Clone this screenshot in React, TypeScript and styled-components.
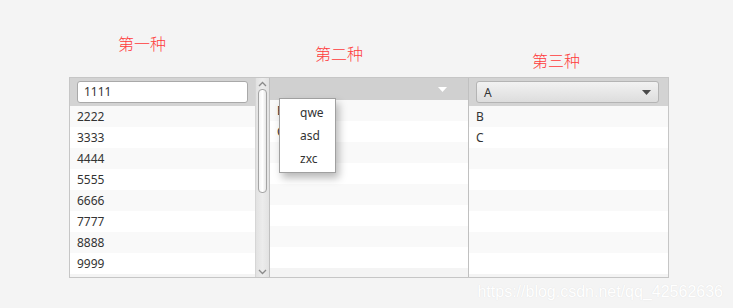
import styled, { createGlobalStyle } from "styled-components";

const GlobalStyle = createGlobalStyle`
  html, body {
    margin: 0;
    padding: 0;
    background: #f4f4f4;
  }
  body {
    font-family: "Noto Sans", "Open Sans", sans-serif;
  }
`;

const listOne = ["2222", "3333", "4444", "5555", "6666", "7777", "8888", "9999"];
const popupItems = ["qwe", "asd", "zxc"];
const listThree = ["B", "C"];

export default function App() {
  return (
    <Page>
      <GlobalStyle />
      <Labels>
        <Title $left={118} $top={35}>第一种</Title>
        <Title $left={149} $top={45}>第二种</Title>
        <Title $left={169} $top={52}>第三种</Title>
      </Labels>
      <Panels>
        <PanelOne>
          <ListPane>
            <FieldHeader>
              <TextField>1111</TextField>
            </FieldHeader>
            {listOne.map((item, index) => (
              <Row key={item} $odd={index % 2 === 0}>
                {item}
              </Row>
            ))}
          </ListPane>
          <ScrollBar>
            <Chevron>
              <svg width="9" height="6" viewBox="0 0 9 6">
                <path d="M1 5 L4.5 1.5 L8 5" fill="none" stroke="#8a8a8a" strokeWidth="1.3" />
              </svg>
            </Chevron>
            <Thumb />
            <Chevron>
              <svg width="9" height="6" viewBox="0 0 9 6">
                <path d="M1 1 L4.5 4.5 L8 1" fill="none" stroke="#8a8a8a" strokeWidth="1.3" />
              </svg>
            </Chevron>
          </ScrollBar>
        </PanelOne>
        <PanelTwo>
          <ArrowHeader>
            <svg width="9" height="5" viewBox="0 0 9 5">
              <path d="M0 0 L9 0 L4.5 5 Z" fill="#ffffff" />
            </svg>
          </ArrowHeader>
          {Array.from({ length: 8 }).map((_, index) => (
            <Row key={index} $odd={index % 2 === 0}>
              {listThree[index] ?? ""}
            </Row>
          ))}
          <Popup>
            {popupItems.map((item) => (
              <PopupItem key={item}>{item}</PopupItem>
            ))}
          </Popup>
        </PanelTwo>
        <PanelThree>
          <FieldHeader>
            <Combo>
              <span>A</span>
              <svg width="9" height="5" viewBox="0 0 9 5">
                <path d="M0 0 L9 0 L4.5 5 Z" fill="#4a4a4a" />
              </svg>
            </Combo>
          </FieldHeader>
          {Array.from({ length: 8 }).map((_, index) => (
            <Row key={index} $odd={index % 2 === 0}>
              {listThree[index] ?? ""}
            </Row>
          ))}
        </PanelThree>
      </Panels>
      <Watermark>https://blog.csdn.net/qq_42562636</Watermark>
    </Page>
  );
}

const Page = styled.div`
  width: 733px;
  height: 308px;
  overflow: hidden;
  position: relative;
`;

const Labels = styled.div`
  height: 77px;
  display: flex;
  align-items: flex-start;
`;

const Title = styled.div<{ $left: number; $top: number }>`
  margin-left: ${(p) => p.$left}px;
  margin-top: ${(p) => p.$top}px;
  width: 48px;
  font-family: "Noto Sans CJK SC", sans-serif;
  font-size: 16px;
  font-weight: 300;
  line-height: 16px;
  color: #ff3b3b;
  white-space: nowrap;
`;

const Panels = styled.div`
  margin-left: 69px;
  width: 598px;
  height: 199px;
  border: 1px solid #c6c6c6;
  display: flex;
  font-size: 12px;
  color: #333333;
`;

const PanelOne = styled.div`
  width: 199px;
  display: flex;
  border-right: 1px solid #c0c0c0;
  overflow: hidden;
`;

const ListPane = styled.div`
  flex: 1;
  overflow: hidden;
`;

const FieldHeader = styled.div`
  height: 28px;
  background: #d3d3d3;
  padding: 3px 0 0 7px;
  box-sizing: border-box;
`;

const TextField = styled.div`
  width: 171px;
  height: 22px;
  box-sizing: border-box;
  background: #ffffff;
  border: 1px solid #a9a9a9;
  border-radius: 3px;
  padding-left: 6px;
  line-height: 20px;
  font-size: 12px;
`;

const Row = styled.div<{ $odd: boolean }>`
  height: 21px;
  line-height: 21px;
  padding-left: 7px;
  background: ${(p) => (p.$odd ? "#f9f9f9" : "#ffffff")};
  white-space: nowrap;
`;

const ScrollBar = styled.div`
  width: 13px;
  background: linear-gradient(to right, #e2e2e2, #ececec 50%, #e2e2e2);
  border-left: 1px solid #d6d6d6;
  display: flex;
  flex-direction: column;
  align-items: center;
`;

const Chevron = styled.div`
  height: 11px;
  display: flex;
  align-items: center;
  justify-content: center;
`;

const Thumb = styled.div`
  width: 9px;
  height: 104px;
  box-sizing: border-box;
  border: 1px solid #a4a4a4;
  border-radius: 4px;
  background: linear-gradient(to right, #f4f4f4, #ffffff 50%, #e6e6e6);
  margin-bottom: auto;
`;

const PanelTwo = styled.div`
  position: relative;
  width: 198px;
  border-right: 1px solid #c0c0c0;
  overflow: visible;
`;

const ArrowHeader = styled.div`
  height: 22px;
  background: #d0d0d0;
  display: flex;
  align-items: center;
  justify-content: flex-end;
  padding-right: 21px;
`;

const Popup = styled.div`
  position: absolute;
  left: 9px;
  top: 20px;
  width: 57px;
  height: 75px;
  box-sizing: border-box;
  background: #ffffff;
  border: 1px solid #a0a0a0;
  box-shadow: 3px 5px 8px rgba(0, 0, 0, 0.28);
  padding-top: 2px;
`;

const PopupItem = styled.div`
  height: 23px;
  line-height: 23px;
  padding-left: 20px;
  color: #333333;
`;

const PanelThree = styled.div`
  flex: 1;
  overflow: hidden;
`;

const Combo = styled.div`
  width: 183px;
  height: 22px;
  box-sizing: border-box;
  border: 1px solid #b4b4b4;
  border-radius: 3px;
  background: linear-gradient(to bottom, #f2f2f2, #dddddd);
  display: flex;
  align-items: center;
  justify-content: space-between;
  padding: 0 7px 0 7px;
`;

const Watermark = styled.div`
  text-align: right;
  padding: 5px 10px 0 0;
  font-family: "Liberation Sans", Arial, sans-serif;
  font-size: 16px;
  color: #ffffff;
  text-shadow: 0 0 1px #dcdcdc;
`;
